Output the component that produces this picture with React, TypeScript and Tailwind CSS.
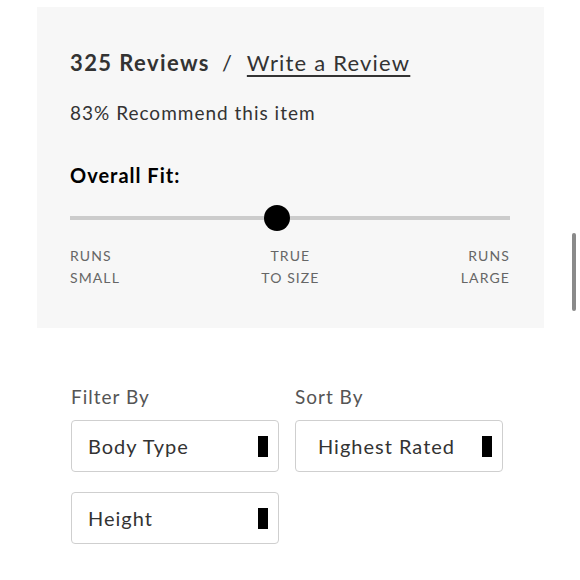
const font = { fontFamily: 'Lato, "Noto Sans", sans-serif' };

const Select = ({ label, pad = 'pl-4' }: { label: string; pad?: string }) => (
  <div className={`h-[52px] w-[208px] border border-[#cfcfcf] rounded-[4px] bg-white flex items-center justify-between ${pad} pr-[10px]`}>
    <span className="text-[20px] text-[#333] tracking-[1px]">{label}</span>
    <span className="w-[10px] h-[21px] bg-black"></span>
  </div>
);

export default function App() {
  return (
    <div className="relative w-[580px] h-[580px] bg-white overflow-hidden" style={font}>
      {/* scrollbar */}
      <div className="absolute left-[572px] top-[233px] w-[4px] h-[78px] rounded-full bg-[#8a8a8a]"></div>

      <div className="pt-[7px] pl-[37px]">
        <div className="w-[507px] h-[321px] bg-[#f7f7f7] pl-[33px] pr-[34px] pt-[41px]">
          <div className="flex items-baseline text-[22px] text-[#333] leading-[30px]">
            <span className="font-bold tracking-[1.4px]">325 Reviews</span>
            <span className="ml-[12px] mr-[15px]">/</span>
            <span className="underline underline-offset-[4px] decoration-[1.5px] tracking-[1.2px]">Write a Review</span>
          </div>
          <div className="mt-[23px] text-[19px] text-[#333] leading-[24px] tracking-[1px]">83% Recommend this item</div>

          <div className="mt-[37px] text-[20px] font-bold text-black leading-[26px] tracking-[1px]">Overall Fit:</div>

          <div className="relative mt-[17px] h-[26px] flex items-center">
            <div className="w-full h-[4px] bg-[#cccccc]"></div>
            <div className="absolute left-[194px] top-0 w-[26px] h-[26px] rounded-full bg-black"></div>
          </div>

          <div className="mt-[14px] flex justify-between text-[14px] text-[#666] leading-[22px] tracking-[1.1px]">
            <div>RUNS<br />SMALL</div>
            <div className="text-center">TRUE<br />TO SIZE</div>
            <div className="text-right">RUNS<br />LARGE</div>
          </div>
        </div>
      </div>

      <div className="pl-[71px] pt-[56px] flex gap-[16px]">
        <div className="flex flex-col">
          <div className="text-[19px] text-[#555] leading-[26px] tracking-[1px] mb-[10px]">Filter By</div>
          <Select label="Body Type" />
          <div className="mt-[20px]">
            <Select label="Height" />
          </div>
        </div>
        <div className="flex flex-col">
          <div className="text-[19px] text-[#555] leading-[26px] tracking-[1px] mb-[10px]">Sort By</div>
          <Select label="Highest Rated" pad="pl-[22px]" />
        </div>
      </div>
    </div>
  );
}
